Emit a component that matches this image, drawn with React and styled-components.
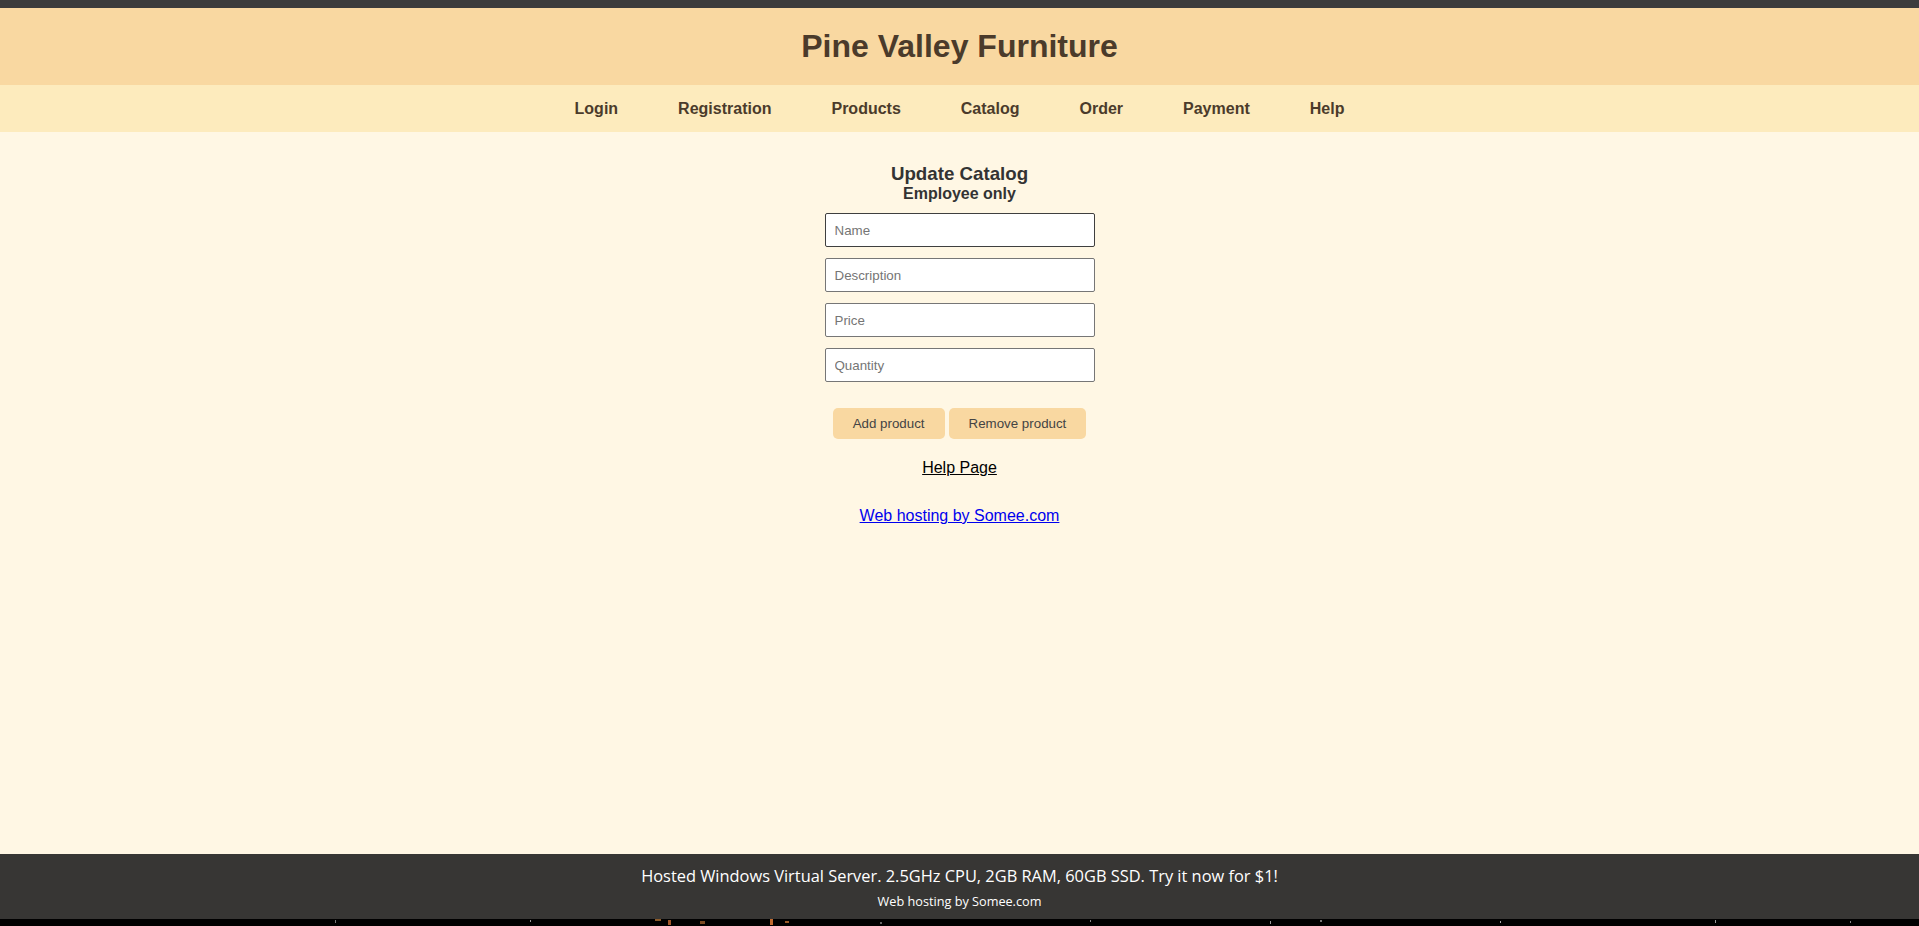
import React from "react";
import styled, { createGlobalStyle } from "styled-components";

const GlobalStyle = createGlobalStyle`
  html, body {
    margin: 0;
    padding: 0;
    background: #fff7e4;
    font-family: "Liberation Sans", Arial, sans-serif;
  }
  #root {
    min-height: 100vh;
  }
`;

const navItems = [
  "Login",
  "Registration",
  "Products",
  "Catalog",
  "Order",
  "Payment",
  "Help",
];

const fields = ["Name", "Description", "Price", "Quantity"];

function App() {
  return (
    <Page>
      <GlobalStyle />
      <TopStrip />
      <Header>
        <h1>Pine Valley Furniture</h1>
      </Header>
      <Nav>
        {navItems.map((item) => (
          <NavLink key={item} href="#">
            {item}
          </NavLink>
        ))}
      </Nav>
      <Main>
        <Form onSubmit={(e) => e.preventDefault()}>
          <Title>Update Catalog</Title>
          <Subtitle>Employee only</Subtitle>
          {fields.map((f, i) => (
            <Field key={f} placeholder={f} $active={i === 0} />
          ))}
          <Buttons>
            <Button type="button">Add product</Button>
            <Button type="button">Remove product</Button>
          </Buttons>
          <HelpLink href="#">Help Page</HelpLink>
          <HostLink href="#">Web hosting by Somee.com</HostLink>
        </Form>
      </Main>
      <Footer>
        <div className="ad">
          Hosted Windows Virtual Server. 2.5GHz CPU, 2GB RAM, 60GB SSD. Try it
          now for $1!
        </div>
        <div className="small">Web hosting by Somee.com</div>
      </Footer>
      <Sparkles>
        <svg width="100%" height="7" preserveAspectRatio="none" viewBox="0 0 1919 7">
          <rect x="0" y="0" width="1919" height="7" fill="#000" />
          <rect x="335" y="1" width="1" height="3" fill="#777" />
          <rect x="530" y="1" width="1" height="2" fill="#999" />
          <rect x="655" y="0" width="6" height="2" fill="#8a5a2a" />
          <rect x="668" y="1" width="3" height="5" fill="#a0562a" />
          <rect x="700" y="2" width="5" height="3" fill="#7a4a22" />
          <rect x="770" y="0" width="3" height="6" fill="#c06a30" />
          <rect x="785" y="2" width="4" height="2" fill="#9a5a28" />
          <rect x="880" y="3" width="2" height="2" fill="#666" />
          <rect x="1090" y="1" width="1" height="2" fill="#888" />
          <rect x="1270" y="2" width="1" height="3" fill="#999" />
          <rect x="1320" y="1" width="2" height="2" fill="#777" />
          <rect x="1500" y="2" width="1" height="2" fill="#aaa" />
          <rect x="1715" y="1" width="1" height="3" fill="#999" />
          <rect x="1850" y="2" width="1" height="2" fill="#888" />
        </svg>
      </Sparkles>
    </Page>
  );
}

const Page = styled.div`
  display: flex;
  flex-direction: column;
  min-height: 100vh;
`;

const TopStrip = styled.div`
  height: 8px;
  background: #3c3c3c;
`;

const Header = styled.header`
  height: 77px;
  background: #f9d8a1;
  display: flex;
  align-items: center;
  justify-content: center;
  h1 {
    margin: 0;
    font-size: 32px;
    font-weight: bold;
    color: #4b3b2b;
  }
`;

const Nav = styled.nav`
  height: 47px;
  background: #fdebbd;
  display: flex;
  align-items: center;
  justify-content: center;
  gap: 60px;
`;

const NavLink = styled.a`
  color: #4b3b2b;
  font-size: 16px;
  font-weight: bold;
  text-decoration: none;
`;

const Main = styled.main`
  flex: 1;
  display: flex;
  justify-content: center;
  padding-top: 31px;
`;

const Form = styled.form`
  display: flex;
  flex-direction: column;
  align-items: center;
  width: 270px;
`;

const Title = styled.h3`
  margin: 0;
  font-size: 18.72px;
  font-weight: bold;
  color: #333;
`;

const Subtitle = styled.div`
  margin: 0 0 10px;
  font-size: 16px;
  font-weight: bold;
  color: #333;
`;

const Field = styled.input`
  box-sizing: border-box;
  width: 270px;
  height: 34px;
  margin-bottom: 11px;
  padding: 0 9px;
  background: #fff;
  border: 1px solid ${(p) => (p.$active ? "#3f3f3f" : "#767676")};
  border-radius: 2px;
  font-family: "Liberation Sans", Arial, sans-serif;
  font-size: 13.33px;
  color: #222;
  outline: none;
  &::placeholder {
    color: #757575;
  }
`;

const Buttons = styled.div`
  display: flex;
  gap: 4px;
  margin-top: 15px;
`;

const Button = styled.button`
  height: 31px;
  padding: 0 20px;
  background: #f9d8a1;
  border: none;
  border-radius: 5px;
  font-family: "Liberation Sans", Arial, sans-serif;
  font-size: 13.33px;
  color: #444;
  cursor: pointer;
`;

const HelpLink = styled.a`
  margin-top: 20px;
  font-size: 16px;
  color: #000;
  text-decoration: underline;
`;

const HostLink = styled.a`
  margin-top: 30px;
  font-size: 16px;
  color: #0000ee;
  text-decoration: underline;
  white-space: nowrap;
`;

const Footer = styled.footer`
  height: 65px;
  background: #373634;
  color: #fff;
  font-family: "Open Sans", "Noto Sans", sans-serif;
  display: flex;
  flex-direction: column;
  align-items: center;
  .ad {
    margin-top: 10px;
    font-size: 16.4px;
    line-height: 23px;
  }
  .small {
    margin-top: 6px;
    font-size: 12.7px;
    line-height: 17px;
  }
`;

const Sparkles = styled.div`
  height: 7px;
  line-height: 0;
  svg {
    display: block;
  }
`;

export default App;
